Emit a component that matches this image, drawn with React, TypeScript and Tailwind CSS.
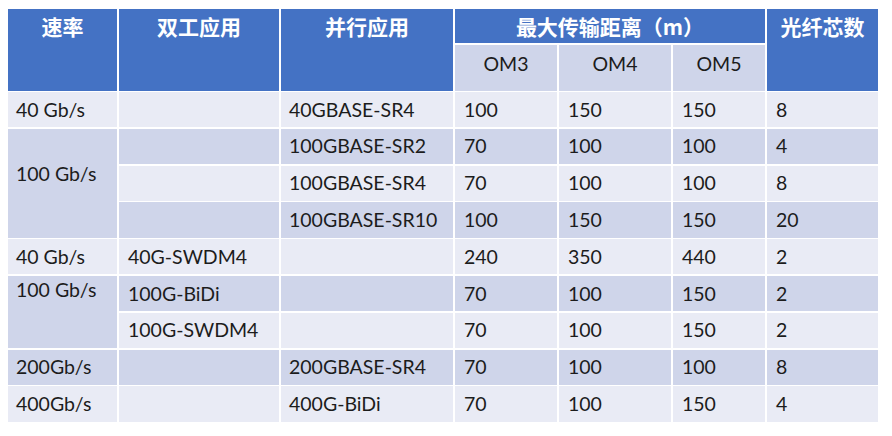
import React from "react";

const colStart = ["col-start-1", "col-start-2", "col-start-3", "col-start-4", "col-start-5", "col-start-6", "col-start-7"];
const rowStart = ["row-start-3", "row-start-4", "row-start-5", "row-start-6", "row-start-7", "row-start-8", "row-start-9", "row-start-10", "row-start-11"];

type Row = { cells: string[]; dark: boolean };

const rows: Row[] = [
  { cells: ["40 Gb/s", "", "40GBASE-SR4", "100", "150", "150", "8"], dark: false },
  { cells: ["", "", "100GBASE-SR2", "70", "100", "100", "4"], dark: true },
  { cells: ["", "", "100GBASE-SR4", "70", "100", "100", "8"], dark: false },
  { cells: ["", "", "100GBASE-SR10", "100", "150", "150", "20"], dark: true },
  { cells: ["40 Gb/s", "40G-SWDM4", "", "240", "350", "440", "2"], dark: false },
  { cells: ["", "100G-BiDi", "", "70", "100", "150", "2"], dark: true },
  { cells: ["", "100G-SWDM4", "", "70", "100", "150", "2"], dark: false },
  { cells: ["200Gb/s", "", "200GBASE-SR4", "70", "100", "100", "8"], dark: true },
  { cells: ["400Gb/s", "", "400G-BiDi", "70", "100", "150", "4"], dark: false },
];

const LIGHT = "bg-[#E9EBF5]";
const DARK = "bg-[#CFD5EA]";

const latin = "font-['Lato','Noto_Sans_CJK_SC',sans-serif]";
const cjk = "font-['Noto_Sans_CJK_SC',sans-serif]";

export default function App() {
  return (
    <div className="w-[892px] h-[436px] bg-white pt-[9px] pl-[8px]">
      <div
        className={`grid grid-cols-[109px_160px_172px_102px_112px_92px_111px] grid-rows-[34px_46px_repeat(9,35.3px)] gap-x-[2px] gap-y-[1.5px] text-[19.5px] leading-[24px] text-[#1c1c1c] ${latin}`}
      >
        {/* Header */}
        <div className={`col-start-1 row-start-1 row-span-2 bg-[#4472C4] text-white font-bold text-[21px] ${cjk}`}>
          <div className="h-[34px] flex items-center justify-center">速率</div>
        </div>
        <div className={`col-start-2 row-start-1 row-span-2 bg-[#4472C4] text-white font-bold text-[21px] ${cjk}`}>
          <div className="h-[34px] flex items-center justify-center">双工应用</div>
        </div>
        <div className={`col-start-3 row-start-1 row-span-2 bg-[#4472C4] text-white font-bold text-[21px] ${cjk}`}>
          <div className="h-[34px] flex items-center justify-center">并行应用</div>
        </div>
        <div className={`col-start-4 col-span-3 row-start-1 bg-[#4472C4] text-white font-bold text-[21px] flex items-center justify-center ${cjk}`}>
          最大传输距离（m）
        </div>
        <div className={`col-start-7 row-start-1 row-span-2 bg-[#4472C4] text-white font-bold text-[21px] ${cjk}`}>
          <div className="h-[34px] flex items-center justify-center">光纤芯数</div>
        </div>
        <div className={`col-start-4 row-start-2 ${DARK} flex justify-center pt-[7px]`}>OM3</div>
        <div className={`col-start-5 row-start-2 ${DARK} flex justify-center pt-[7px]`}>OM4</div>
        <div className={`col-start-6 row-start-2 ${DARK} flex justify-center pt-[7px]`}>OM5</div>

        {/* Merged 速率 cells */}
        <div className={`col-start-1 row-start-4 row-span-3 ${DARK} pl-[8px] pt-[33px]`}>100 Gb/s</div>
        <div className={`col-start-1 row-start-8 row-span-2 ${DARK} pl-[8px] pt-[2px]`}>100 Gb/s</div>

        {rows.map((r, ri) =>
          r.cells.map((c, ci) => {
            if (ci === 0 && (ri === 1 || ri === 2 || ri === 3 || ri === 5 || ri === 6)) return null;
            const pad = ci === 0 || ci === 2 ? "pl-[8px]" : "pl-[9px]";
            return (
              <div
                key={`${ri}-${ci}`}
                className={`${colStart[ci]} ${rowStart[ri]} ${r.dark ? DARK : LIGHT} ${pad} flex items-center`}
              >
                {c}
              </div>
            );
          })
        )}
      </div>
    </div>
  );
}
